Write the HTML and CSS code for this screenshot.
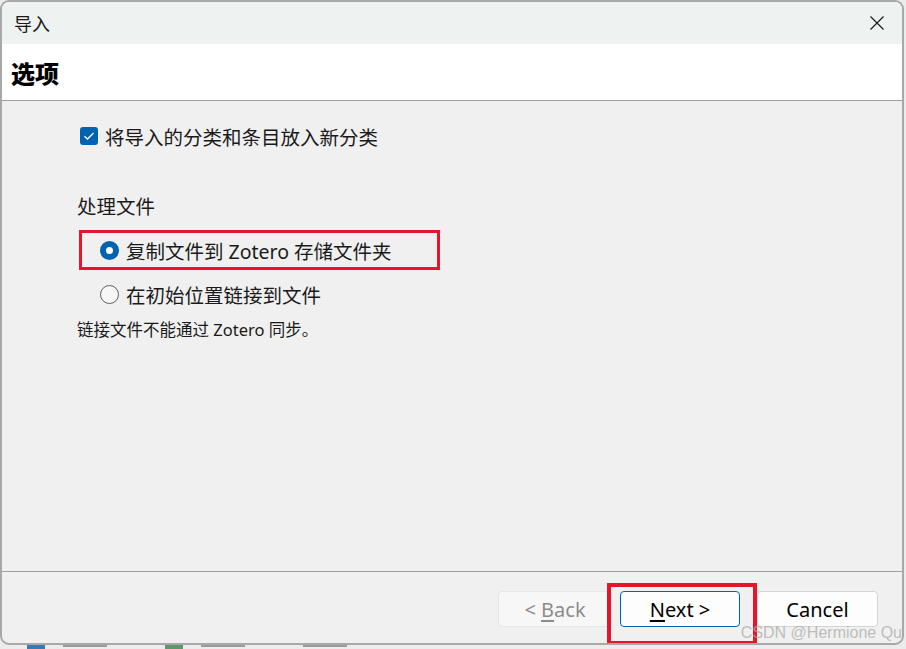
FILE: index.html
```html
<!DOCTYPE html>
<html lang="zh-CN">

<head>
    <meta charset="UTF-8" />
    <meta name="viewport" content="width=device-width, initial-scale=1.0" />
    <title>导入</title>
    <link rel="stylesheet" href="styles.css">
</head>

<body>
    <div class="window">
        <!-- 标题栏 -->
        <div class="titlebar">
            <span class="title">导入</span>
            <button class="close" aria-label="关闭">
                <svg width="16" height="16" viewBox="0 0 16 16">
                    <path d="M1.5 1.5 L14.5 14.5 M14.5 1.5 L1.5 14.5" stroke="#1b1b1b" stroke-width="1.2" fill="none" />
                </svg>
            </button>
        </div>

        <!-- 页面标题 -->
        <div class="header">
            <h1>选项</h1>
        </div>

        <!-- 选项内容 -->
        <div class="content">
            <label class="check-row">
                <span class="checkbox">
                    <svg width="12" height="10" viewBox="0 0 12 10">
                        <path d="M1.5 5.2 L4.5 8 L10.5 2" stroke="#fff" stroke-width="1.3" fill="none" />
                    </svg>
                </span>
                将导入的分类和条目放入新分类
            </label>

            <div class="group-title">处理文件</div>

            <div class="mark-box">
                <label class="radio-row">
                    <span class="radio checked"></span>
                    复制文件到 Zotero 存储文件夹
                </label>
            </div>

            <label class="radio-row second">
                <span class="radio"></span>
                在初始位置链接到文件
            </label>

            <p class="note">链接文件不能通过 Zotero 同步。</p>
        </div>

        <!-- 底部按钮 -->
        <div class="footer">
            <button class="btn btn-back" disabled>&lt; <u>B</u>ack</button>
            <button class="btn btn-next"><u>N</u>ext &gt;</button>
            <button class="btn btn-cancel">Cancel</button>
        </div>

        <div class="watermark">CSDN @Hermione Qu</div>
    </div>

    <div class="taskbar">
        <span class="task-icon blue"></span>
        <span class="task-text"></span>
        <span class="task-icon green"></span>
        <span class="task-text"></span>
        <span class="task-text"></span>
    </div>
</body>

</html>
```

FILE: styles.css
```css
body {
    margin: 0;
    background: #ececec;
    font-family: "Noto Sans", "Noto Sans CJK SC", sans-serif;
    color: #1a1a1a;
    overflow: hidden;
}

.window {
    position: relative;
    box-sizing: border-box;
    width: 904px;
    height: 645px;
    border: 2px solid #a8a8a8;
    border-radius: 9px;
    background: #f0f0f0;
    display: flex;
    flex-direction: column;
    overflow: hidden;
}

/* 标题栏 */
.titlebar {
    height: 42px;
    background: #eef3f2;
    display: flex;
    align-items: center;
    justify-content: space-between;
    padding: 0 0 0 12px;
}

.title {
    font-family: "Noto Sans CJK SC", sans-serif;
    font-size: 18px;
    color: #1a1a1a;
}

.close {
    width: 46px;
    height: 42px;
    margin-right: 2px;
    border: 0;
    background: none;
    display: flex;
    align-items: center;
    justify-content: center;
    padding: 0;
}

/* 页面标题 */
.header {
    height: 56px;
    background: #fff;
    border-bottom: 1px solid #a0a0a0;
    display: flex;
    align-items: center;
    padding-left: 9px;
}

.header h1 {
    margin: 0;
    font-family: "Noto Sans CJK SC", sans-serif;
    font-size: 24px;
    font-weight: 900;
    color: #000;
}

/* 内容 */
.content {
    flex: 1;
    padding: 21px 0 0 75px;
    font-size: 19.5px;
}

.check-row,
.radio-row {
    display: flex;
    align-items: center;
    height: 28px;
    gap: 7px;
}

.check-row {
    margin-left: 3px;
}

.checkbox {
    width: 18px;
    height: 18px;
    border-radius: 3px;
    background: #0063b1;
    display: flex;
    align-items: center;
    justify-content: center;
}

.group-title {
    margin-top: 43px;
    height: 28px;
    line-height: 28px;
}

.mark-box {
    margin: 9px 0 0 2px;
    width: 361px;
    height: 40px;
    box-sizing: border-box;
    border: 3px solid #e6162a;
    display: flex;
    align-items: center;
    padding-left: 18px;
}

.radio {
    box-sizing: border-box;
    width: 19px;
    height: 19px;
    border-radius: 50%;
    border: 1px solid #5f5f5f;
    background: #f7f7f7;
}

.radio.checked {
    border: 6px solid #0063b1;
    background: #fff;
}

.radio-row.second {
    margin: 10px 0 0 23px;
}

.note {
    margin: 11px 0 0;
    font-size: 16.5px;
    line-height: 22px;
}

/* 底部 */
.footer {
    height: 72px;
    box-sizing: border-box;
    border-top: 1px solid #a0a0a0;
    display: flex;
    justify-content: flex-end;
    align-items: flex-start;
    padding: 19px 24px 0 0;
}

.btn {
    height: 36px;
    box-sizing: border-box;
    border: 1px solid #d4d4d4;
    border-radius: 4px;
    background: #fdfdfd;
    font-family: "Noto Sans", sans-serif;
    font-size: 20px;
    color: #000;
    padding: 0;
}

.btn u {
    text-underline-offset: 3px;
}

.btn-back {
    width: 114px;
    background: #f7f7f7;
    border-color: #e6e6e6;
    color: #8c8c8c;
}

.btn-next {
    position: relative;
    width: 120px;
    margin-left: 8px;
    border-color: #0063b1;
}

/* 红色标注框 */
.btn-next::after {
    content: "";
    position: absolute;
    left: -14px;
    top: -9px;
    right: -18px;
    bottom: -19px;
    border: 4px solid #e6162a;
}

.btn-cancel {
    width: 121px;
    margin-left: 17px;
}

.watermark {
    position: absolute;
    right: 0;
    bottom: 1px;
    font-family: "Liberation Sans", sans-serif;
    font-size: 16px;
    color: rgba(170, 170, 170, 0.75);
}

/* 任务栏残影 */
.taskbar {
    display: flex;
    gap: 18px;
    padding-left: 27px;
    height: 4px;
    align-items: flex-start;
}

.task-icon {
    width: 18px;
    height: 4px;
}

.task-icon.blue {
    background: #3a78b8;
}

.task-icon.green {
    background: #5a9a6a;
}

.task-text {
    width: 44px;
    height: 2px;
    background: #9a9a9a;
    margin-right: 40px;
}
```
